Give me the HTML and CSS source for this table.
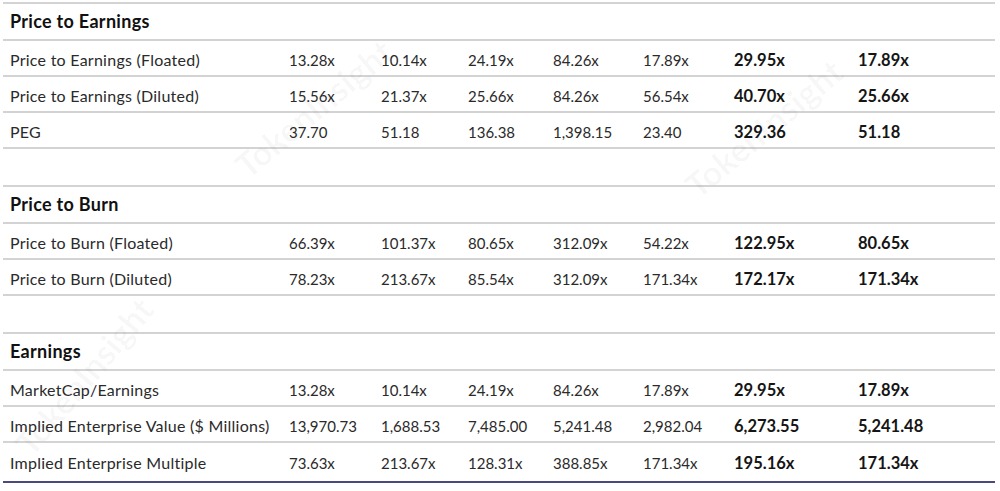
FILE: index.html
```html
<!DOCTYPE html>
<html lang="en">
<head>
<meta charset="utf-8">
<title>Valuation Multiples</title>
<link rel="stylesheet" href="styles.css">
</head>
<body>
<div class="page">
  <div class="sheet">
    <div class="row head"><div class="label">Price to Earnings</div></div>
    <div class="row data"><div class="label">Price to Earnings (Floated)</div><div>13.28x</div><div>10.14x</div><div>24.19x</div><div>84.26x</div><div>17.89x</div><div class="b">29.95x</div><div class="b">17.89x</div></div>
    <div class="row data"><div class="label">Price to Earnings (Diluted)</div><div>15.56x</div><div>21.37x</div><div>25.66x</div><div>84.26x</div><div>56.54x</div><div class="b">40.70x</div><div class="b">25.66x</div></div>
    <div class="row data"><div class="label">PEG</div><div>37.70</div><div>51.18</div><div>136.38</div><div>1,398.15</div><div>23.40</div><div class="b">329.36</div><div class="b">51.18</div></div>
    <div class="row spacer"></div>
    <div class="row head"><div class="label">Price to Burn</div></div>
    <div class="row data"><div class="label">Price to Burn (Floated)</div><div>66.39x</div><div>101.37x</div><div>80.65x</div><div>312.09x</div><div>54.22x</div><div class="b">122.95x</div><div class="b">80.65x</div></div>
    <div class="row data"><div class="label">Price to Burn (Diluted)</div><div>78.23x</div><div>213.67x</div><div>85.54x</div><div>312.09x</div><div>171.34x</div><div class="b">172.17x</div><div class="b">171.34x</div></div>
    <div class="row spacer"></div>
    <div class="row head"><div class="label">Earnings</div></div>
    <div class="row data"><div class="label">MarketCap/Earnings</div><div>13.28x</div><div>10.14x</div><div>24.19x</div><div>84.26x</div><div>17.89x</div><div class="b">29.95x</div><div class="b">17.89x</div></div>
    <div class="row data"><div class="label">Implied Enterprise Value ($ Millions)</div><div>13,970.73</div><div>1,688.53</div><div>7,485.00</div><div>5,241.48</div><div>2,982.04</div><div class="b">6,273.55</div><div class="b">5,241.48</div></div>
    <div class="row data last"><div class="label">Implied Enterprise Multiple</div><div>73.63x</div><div>213.67x</div><div>128.31x</div><div>388.85x</div><div>171.34x</div><div class="b">195.16x</div><div class="b">171.34x</div></div>
  </div>
  <div class="watermark">
    <span class="wm wm1">TokenInsight</span>
    <span class="wm wm2">TokenInsight</span>
    <span class="wm wm3">TokenInsight</span>
  </div>
</div>
</body>
</html>
```
FILE: styles.css
```css
html, body {
  margin: 0;
  padding: 0;
  background: #ffffff;
}
.page {
  position: relative;
  width: 1000px;
  height: 491px;
  overflow: hidden;
  font-family: Lato, "Open Sans", sans-serif;
  font-size: 15px;
  color: #2a2a2a;
}
.sheet {
  margin: 2px 0 0 3px;
  width: 992px;
  border-top: 2px solid #d3d3d3;
}
.row {
  display: grid;
  grid-template-columns: 279px 92px 87px 85px 90px 91px 124px 1fr;
  align-items: center;
  border-bottom: 2px solid #d3d3d3;
  box-sizing: border-box;
}
.row > div {
  padding-left: 7px;
  white-space: nowrap;
  line-height: 20px;
}
.data .label {
  font-size: 16px;
  letter-spacing: 0.25px;
}
.head {
  height: 37px;
  font-weight: 700;
  font-size: 18px;
  letter-spacing: 0.3px;
  color: #111;
  padding-bottom: 2px;
}
.data {
  height: 36px;
  align-items: baseline;
  padding-top: 9px;
}
.spacer {
  height: 38px;
}
.last {
  height: 40px;
  padding-top: 10px;
  border-bottom-color: #4b4a7c;
}
.b {
  font-weight: 700;
  font-size: 16.5px;
  color: #151515;
}
.watermark {
  position: absolute;
  inset: 0;
  pointer-events: none;
}
.wm {
  position: absolute;
  font-family: Lato, sans-serif;
  font-weight: 700;
  font-size: 34px;
  line-height: 40px;
  color: rgba(0, 0, 0, 0.035);
  white-space: nowrap;
  transform-origin: left center;
}
.wm1 {
  left: 22px;
  top: 430px;
  transform: rotate(-50deg);
}
.wm2 {
  left: 240px;
  top: 150px;
  transform: rotate(-40deg);
}
.wm3 {
  left: 690px;
  top: 170px;
  transform: rotate(-40deg);
}
```
